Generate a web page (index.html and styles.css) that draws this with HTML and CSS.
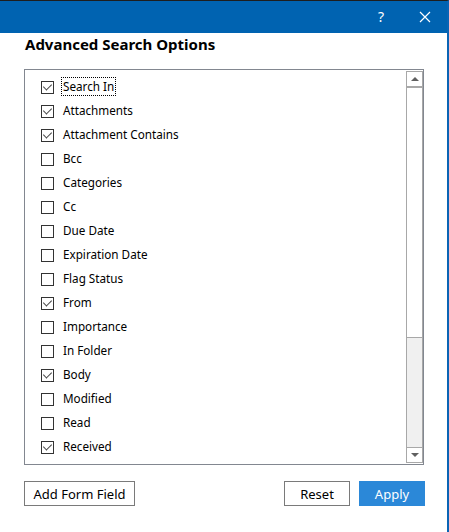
FILE: index.html
```html
<!DOCTYPE html>
<html>
<head>
<meta charset="utf-8">
<link rel="stylesheet" href="styles.css">
</head>
<body>
<div class="window">
  <div class="titlebar">
    <span class="help">?</span>
    <svg class="close" width="12" height="12" viewBox="0 0 12 12"><path d="M1 1 L11 11 M11 1 L1 11" stroke="#fff" stroke-width="1.2" fill="none"/></svg>
  </div>
  <div class="content">
    <h1 class="heading">Advanced Search Options</h1>
    <div class="listbox">
      <ul class="items">
        <li class="item checked"><span class="box"></span><span class="label focus">Search In</span></li>
        <li class="item checked"><span class="box"></span><span class="label">Attachments</span></li>
        <li class="item checked"><span class="box"></span><span class="label">Attachment Contains</span></li>
        <li class="item"><span class="box"></span><span class="label">Bcc</span></li>
        <li class="item"><span class="box"></span><span class="label">Categories</span></li>
        <li class="item"><span class="box"></span><span class="label">Cc</span></li>
        <li class="item"><span class="box"></span><span class="label">Due Date</span></li>
        <li class="item"><span class="box"></span><span class="label">Expiration Date</span></li>
        <li class="item"><span class="box"></span><span class="label">Flag Status</span></li>
        <li class="item checked"><span class="box"></span><span class="label">From</span></li>
        <li class="item"><span class="box"></span><span class="label">Importance</span></li>
        <li class="item"><span class="box"></span><span class="label">In Folder</span></li>
        <li class="item checked"><span class="box"></span><span class="label">Body</span></li>
        <li class="item"><span class="box"></span><span class="label">Modified</span></li>
        <li class="item"><span class="box"></span><span class="label">Read</span></li>
        <li class="item checked"><span class="box"></span><span class="label">Received</span></li>
      </ul>
      <div class="scrollbar">
        <div class="sb-btn sb-up"><span class="tri-up"></span></div>
        <div class="sb-thumb"></div>
        <div class="sb-track"></div>
        <div class="sb-btn sb-down"><span class="tri-down"></span></div>
      </div>
    </div>
    <div class="buttons">
      <button class="btn btn-add">Add Form Field</button>
      <div class="spacer"></div>
      <button class="btn btn-reset">Reset</button>
      <button class="btn btn-apply">Apply</button>
    </div>
  </div>
</div>
</body>
</html>
```
FILE: styles.css
```css
* { box-sizing: border-box; }
html, body { margin: 0; padding: 0; background: #fff; }
body {
  font-family: "Noto Sans", "Open Sans", sans-serif;
  color: #000;
  width: 449px;
  height: 532px;
  overflow: hidden;
}
.window {
  width: 449px;
  height: 532px;
  border-top: 1px solid #1e1e1e;
  border-right: 2px solid #0a64b4;
  background: #fff;
}
.titlebar {
  height: 32px;
  background: #0063b1;
  display: flex;
  align-items: center;
  justify-content: flex-end;
  color: #fff;
}
.help {
  font-family: "Noto Sans", sans-serif;
  font-size: 14px;
  margin-right: 35px;
  margin-top: -1px;
}
.close {
  margin-right: 16px;
  width: 12px;
  height: 12px;
}
.content {
  padding: 0 0 0 24px;
}
.heading {
  margin: 0 0 0 1px;
  height: 36px;
  padding-top: 1px;
  font-size: 15px;
  font-weight: bold;
  line-height: 20px;
}
.listbox {
  width: 400px;
  height: 396px;
  border: 1px solid #828790;
  display: flex;
}
.items {
  list-style: none;
  margin: 0;
  padding: 4px 0 0 16px;
  flex: 1;
}
.item {
  height: 24px;
  display: flex;
  align-items: center;
  font-size: 11.7px;
}
.box {
  width: 13px;
  height: 13px;
  border: 1px solid #333;
  background: #fff;
  margin-right: 7px;
  margin-top: 2px;
  position: relative;
  flex: none;
}
.item.checked .box::after {
  content: "";
  position: absolute;
  left: 3px;
  top: 0px;
  width: 4px;
  height: 7px;
  border-right: 1px solid #444;
  border-bottom: 1px solid #444;
  transform: rotate(45deg);
}
.label {
  padding: 1px 1px;
  border: 1px solid transparent;
  line-height: 15px;
}
.label.focus {
  border: 1px dotted #000;
}
.scrollbar {
  width: 17px;
  margin: 1px 0;
  border: 1px solid #a8a8a8;
  background: #f0f0f0;
  display: flex;
  flex-direction: column;
}
.sb-btn {
  height: 16px;
  background: #fff;
  display: flex;
  align-items: center;
  justify-content: center;
}
.sb-up { border-bottom: 2px solid #a8a8a8; }
.sb-down { border-top: 1px solid #a8a8a8; height: 15px; }
.sb-thumb {
  height: 250px;
  background: #fff;
  border-bottom: 1px solid #a8a8a8;
}
.sb-track { flex: 1; }
.tri-up {
  width: 0; height: 0;
  border-left: 4px solid transparent;
  border-right: 4px solid transparent;
  border-bottom: 4px solid #606060;
}
.tri-down {
  width: 0; height: 0;
  border-left: 4px solid transparent;
  border-right: 4px solid transparent;
  border-top: 4px solid #606060;
}
.buttons {
  display: flex;
  margin-top: 16px;
  width: 401px;
  gap: 9px;
}
.spacer { flex: 1; }
.btn {
  height: 25px;
  border: 1px solid #7a7a7a;
  background: #fff;
  font-family: "Noto Sans", "Open Sans", sans-serif;
  font-size: 13px;
  color: #000;
  padding: 0;
}
.btn-add { width: 111px; }
.btn-reset { width: 66px; }
.btn-apply { width: 66px; background: #2b88d8; border-color: #2b88d8; color: #fff; }
```
